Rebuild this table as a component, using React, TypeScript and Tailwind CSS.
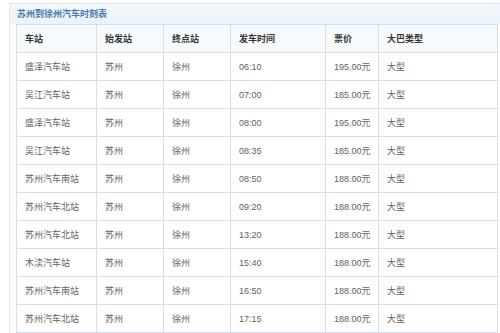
const rows = [
  ["盛泽汽车站", "苏州", "徐州", "06:10", "195.00元", "大型"],
  ["吴江汽车站", "苏州", "徐州", "07:00", "185.00元", "大型"],
  ["盛泽汽车站", "苏州", "徐州", "08:00", "195.00元", "大型"],
  ["吴江汽车站", "苏州", "徐州", "08:35", "185.00元", "大型"],
  ["苏州汽车南站", "苏州", "徐州", "08:50", "188.00元", "大型"],
  ["苏州汽车北站", "苏州", "徐州", "09:20", "188.00元", "大型"],
  ["苏州汽车北站", "苏州", "徐州", "13:20", "188.00元", "大型"],
  ["木渎汽车站", "苏州", "徐州", "15:40", "188.00元", "大型"],
  ["苏州汽车南站", "苏州", "徐州", "16:50", "188.00元", "大型"],
  ["苏州汽车北站", "苏州", "徐州", "17:15", "188.00元", "大型"],
];

const headers = ["车站", "始发站", "终点站", "发车时间", "票价", "大巴类型"];
const widths = ["w-[80px]", "w-[67px]", "w-[67px]", "w-[95px]", "w-[53px]", "w-[119px]"];

export default function App() {
  return (
    <div
      className="h-[333px] w-[500px] overflow-hidden bg-white pl-[9px] pt-[3px]"
      style={{ fontFamily: '"Liberation Sans", "Noto Sans CJK SC", sans-serif' }}
    >
      <div className="h-full border-l border-t border-[#dfe6ec] pl-[6px]">
        <div className="-ml-[6px] flex h-[20px] items-center bg-gradient-to-b from-[#f3f8fc] to-[#e9f3fb] pl-[7px]">
          <span className="text-[9px] font-bold leading-none text-[#4b7bb0]">苏州到徐州汽车时刻表</span>
        </div>
        <table className="table-fixed border-collapse text-[9px] leading-none text-[#5f5f5f]">
          <thead>
            <tr className="h-[28px] bg-[#f6fafd]">
              {headers.map((h, i) => (
                <th
                  key={h}
                  className={`${widths[i]} whitespace-nowrap border border-[#d6dfe7] pl-[8px] pt-[2px] text-left font-bold text-[#333]`}
                >
                  {h}
                </th>
              ))}
            </tr>
          </thead>
          <tbody>
            {rows.map((r, ri) => (
              <tr key={ri} className="h-[28px]">
                {r.map((c, ci) => (
                  <td key={ci} className="whitespace-nowrap border border-[#d6dfe7] pl-[8px] pt-[2px]">
                    {c}
                  </td>
                ))}
              </tr>
            ))}
          </tbody>
        </table>
      </div>
    </div>
  );
}
